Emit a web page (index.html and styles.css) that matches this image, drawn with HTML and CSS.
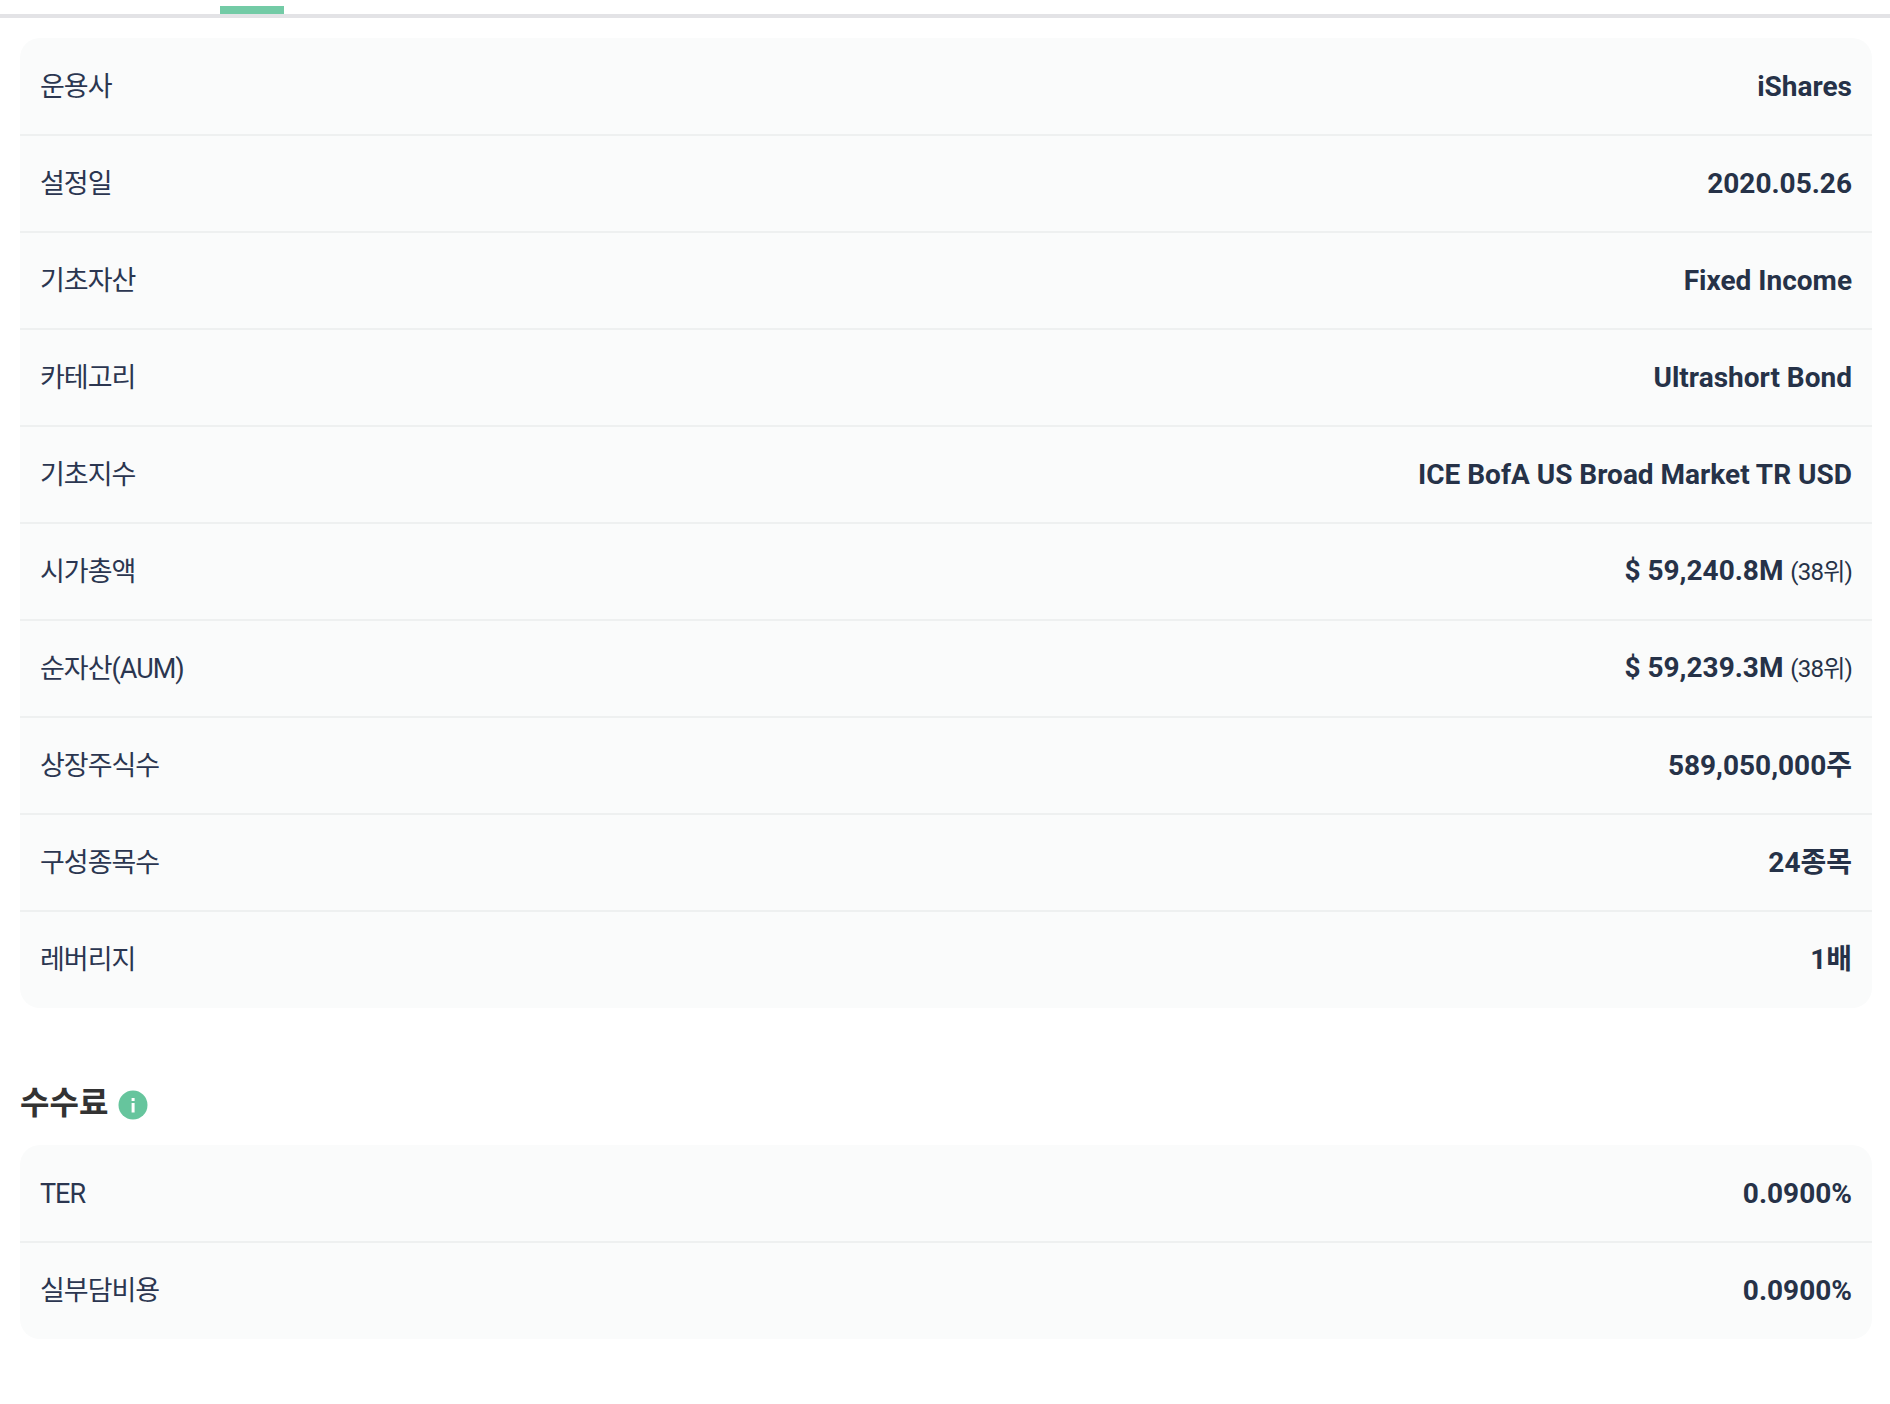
FILE: index.html
```html
<!DOCTYPE html>
<html lang="ko">
<head>
<meta charset="utf-8">
<title>ETF</title>
<link rel="stylesheet" href="styles.css">
</head>
<body>
<div class="tabs"><div class="tab-active"></div></div>
<main class="content">
  <section class="card">
    <div class="row"><span class="label">운용사</span><span class="value">iShares</span></div>
    <div class="row"><span class="label">설정일</span><span class="value">2020.05.26</span></div>
    <div class="row"><span class="label">기초자산</span><span class="value">Fixed Income</span></div>
    <div class="row"><span class="label">카테고리</span><span class="value">Ultrashort Bond</span></div>
    <div class="row"><span class="label">기초지수</span><span class="value">ICE BofA US Broad Market TR USD</span></div>
    <div class="row"><span class="label">시가총액</span><span class="value">$ 59,240.8M <small class="rank">(38위)</small></span></div>
    <div class="row"><span class="label">순자산(AUM)</span><span class="value">$ 59,239.3M <small class="rank">(38위)</small></span></div>
    <div class="row"><span class="label">상장주식수</span><span class="value">589,050,000주</span></div>
    <div class="row"><span class="label">구성종목수</span><span class="value">24종목</span></div>
    <div class="row"><span class="label">레버리지</span><span class="value">1배</span></div>
  </section>
  <h2 class="heading">수수료
    <svg class="info" viewBox="0 0 30 30" width="30" height="30" aria-hidden="true"><circle cx="15" cy="15" r="14.5" fill="#66c59d"/><rect x="13.6" y="13" width="3" height="9.5" fill="#fff"/><rect x="13.6" y="8" width="3" height="3" fill="#fff"/></svg>
  </h2>
  <section class="card">
    <div class="row"><span class="label">TER</span><span class="value">0.0900%</span></div>
    <div class="row"><span class="label">실부담비용</span><span class="value">0.0900%</span></div>
  </section>
</main>
</body>
</html>
```
FILE: styles.css
```css
* { box-sizing: border-box; }
html, body { margin: 0; padding: 0; background: #fff; }
body { font-family: Roboto, "Noto Sans CJK KR", sans-serif; height: 1404px; overflow: hidden; }
.tabs { height: 18px; border-bottom: 4px solid #e3e3e6; padding: 6px 0 0 220px; }
.tab-active { width: 64px; height: 8px; background: #73cba6; }
.content { padding: 20px 18px 0 20px; }
.card { background: #fafbfb; border-radius: 20px; overflow: hidden; padding-top: 1px; }
.row { height: 97px; display: flex; justify-content: space-between; align-items: center; padding: 0 20px; border-bottom: 2px solid #eef0f0; }
.row:last-child { border-bottom: 0; height: 96px; }
.label { font-size: 27px; line-height: 40px; letter-spacing: -1px; color: #2b3650; }
.value { font-size: 28px; line-height: 40px; font-weight: 700; color: #263248; }
.rank { font-size: 24px; font-weight: 400; letter-spacing: -0.8px; }
.heading { margin: 70px 0 0; height: 67px; display: flex; align-items: flex-start; gap: 10px; padding-top: 5px; font-size: 32px; line-height: 40px; font-weight: 700; color: #333; }
.info { margin-top: 7px; }
```
